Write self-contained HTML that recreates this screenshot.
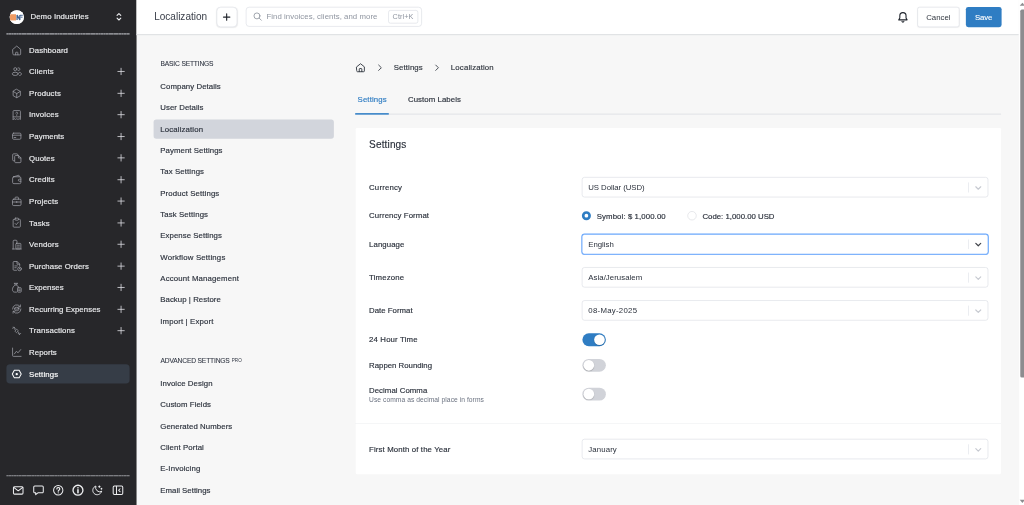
<!DOCTYPE html><html><head><meta charset="utf-8"><title>Localization</title><style>
*{box-sizing:border-box;margin:0;padding:0}
html,body{width:1024px;height:505px;overflow:hidden;background:#f7f7f7}
body{font-family:"Liberation Sans",sans-serif;color:#30363f}
#root{filter:opacity(1);position:absolute;left:0;top:0;width:1920px;height:947px;transform:scale(0.533333);transform-origin:0 0;overflow:hidden;background:#f7f7f7}
.abs{position:absolute}
span{white-space:pre}
.row{position:absolute;display:flex;align-items:center}
svg{display:block;overflow:visible}
#sidebar{left:0;top:0;width:256px;height:947px;background:#27272a;color:#ebecee}
.dash{left:12px;width:231px;height:2.3px;background:repeating-linear-gradient(90deg,#919297 0,#919297 3.4px,#77787d 3.4px,#77787d 4.8px)}
.navi{left:12px;width:231px;height:36px;border-radius:7px}
.navi .ic{position:absolute;left:10.2px;top:8.6px;width:18.8px;height:18.8px;color:#9a9ca3}
.navi .lb{position:absolute;left:42.5px;top:0;height:36px;display:flex;align-items:center}
.navi .pl{position:absolute;left:208px;top:11px;width:14px;height:14px;color:#dfe0e4}
#header{left:256px;top:0;width:1654px;height:65.5px;background:#fff;border-bottom:2px solid #dddfe2}
.btn{border-radius:4.5px;display:flex;align-items:center;justify-content:center}
.snav{left:288px;width:338px;height:36px;border-radius:5px;display:flex;align-items:center;padding-left:12.5px}
.sel{border:1.5px solid #d4d8df;border-radius:5px;background:#fff;height:38px;left:1091px;width:761.5px}
.sel .v{position:absolute;left:11px;top:0.6px;height:35px;display:flex;align-items:center}
.sel .sep{position:absolute;right:35.2px;top:9px;width:1.6px;height:18.5px;background:#dadde4}
.sel .ch{position:absolute;right:8.500px;top:10px;width:18.5px;height:18.5px;color:#c6c9d0}
.lab{left:692px;height:20px;display:flex;align-items:center}
.tog{left:1092px;width:44px;height:24px;border-radius:12px;background:#d1d3d9}
.tog i{position:absolute;top:2px;left:2px;width:20px;height:20px;border-radius:10px;background:#fff;box-shadow:0 1px 2px rgba(0,0,0,.25)}
.tog.on{background:#2f7dc3}
.tog.on i{left:22px}
</style></head><body><div id="root"><div id="sidebar" class="abs"><div class="abs" style="left:18.1px;top:18.5px;width:26.6px;height:26.6px;border-radius:50%;background:#fff;overflow:hidden"><svg viewBox="0 0 26.6 26.6" width="26.6" height="26.6"><rect width="26.6" height="26.6" fill="#fff"/><rect x="0.8" y="7.7" width="11.3" height="11.600" fill="#ef9a62"/><path d="M14 18.3V9.200l5.200 9.100V9.200" fill="none" stroke="#41618f" stroke-width="2.3" stroke-linejoin="bevel"/><path d="M19.500 9.700h5.200M20.500 13.200h3.800" stroke="#41618f" stroke-width="1.800"/></svg></div><div class="row" style="left:57px;top:10.5px;height:40px"><span style="font-size:14.63px;letter-spacing:0.198px;font-weight:400;-webkit-text-stroke:0.3px currentColor;">Demo Industries</span></div><div class="abs" style="left:214.5px;top:22px;width:16px;height:19px;color:#f0f1f3"><svg viewBox="0 0 16 18" width="16" height="19" fill="none" stroke="currentColor" stroke-width="2" stroke-linecap="round" stroke-linejoin="round"><path d="M4.5 6.5L8 3L11.5 6.5M4.5 11.5L8 15L11.5 11.5"/></svg></div><div class="abs dash" style="top:62.3px"></div><div class="abs navi" style="top:76.00px;"><div class="ic" style=""><svg viewBox="0 0 18 18" width="100%" height="100%" fill="none" stroke="currentColor" stroke-width="1.4" stroke-linecap="round" stroke-linejoin="round" ><path d="M2 7.200L9 1.300l7 5.900v8.300a1.600 1.600 0 0 1-1.600 1.600H3.600A1.600 1.600 0 0 1 2 15.500z"/><path d="M7 17v-3.800a0.800 0.800 0 0 1 .8-.8h2.400a0.800 0.800 0 0 1 .8.8V17"/></svg></div><div class="lb"><span style="font-size:14.63px;letter-spacing:0.163px;font-weight:400;-webkit-text-stroke:0.3px currentColor;">Dashboard</span></div></div><div class="abs navi" style="top:116.47px;"><div class="ic" style=""><svg viewBox="0 0 18 18" width="100%" height="100%" fill="none" stroke="currentColor" stroke-width="1.4" stroke-linecap="round" stroke-linejoin="round" ><circle cx="6.400" cy="4.500" r="2.700"/><path d="M11.300 2.200a2.500 2.500 0 1 1 0 4.600"/><ellipse cx="6.300" cy="12.900" rx="5.400" ry="2.900"/><path d="M13.200 10.200c2.600.1 4.300 1.300 4.300 2.900 0 1.300-1.300 2.400-3.300 2.800"/></svg></div><div class="lb"><span style="font-size:14.63px;letter-spacing:0.205px;font-weight:400;-webkit-text-stroke:0.3px currentColor;">Clients</span></div><div class="pl"><svg viewBox="0 0 14 14" width="100%" height="100%" fill="none" stroke="currentColor" stroke-width="1.5" stroke-linecap="round" stroke-linejoin="round" ><path d="M7 1v12M1 7h12"/></svg></div></div><div class="abs navi" style="top:156.94px;"><div class="ic" style=""><svg viewBox="0 0 18 18" width="100%" height="100%" fill="none" stroke="currentColor" stroke-width="1.4" stroke-linecap="round" stroke-linejoin="round" ><path d="M9 1.5l6.5 3.7v7.600L9 16.500 2.500 12.800V5.200z"/><path d="M2.700 5.300L9 9l6.300-3.700M9 9v7.300"/></svg></div><div class="lb"><span style="font-size:14.63px;letter-spacing:0.277px;font-weight:400;-webkit-text-stroke:0.3px currentColor;">Products</span></div><div class="pl"><svg viewBox="0 0 14 14" width="100%" height="100%" fill="none" stroke="currentColor" stroke-width="1.5" stroke-linecap="round" stroke-linejoin="round" ><path d="M7 1v12M1 7h12"/></svg></div></div><div class="abs navi" style="top:197.41px;"><div class="ic" style=""><svg viewBox="0 0 18 18" width="100%" height="100%" fill="none" stroke="currentColor" stroke-width="1.4" stroke-linecap="round" stroke-linejoin="round" ><path d="M2.400 17.200V2.800a1.500 1.500 0 0 1 1.500-1.500h10.200a1.500 1.500 0 0 1 1.500 1.500v14.400l-2.200-1.300-2.200 1.300L9 15.900l-2.200 1.300-2.200-1.300z"/><path d="M2.600 12.600h12.800"/><path d="M7.300 5.900a1.700 1.700 0 1 1 2.500 1.500c-.5.300-.8.600-.8 1.200M9 10.300v.1"/></svg></div><div class="lb"><span style="font-size:14.63px;letter-spacing:0.246px;font-weight:400;-webkit-text-stroke:0.3px currentColor;">Invoices</span></div><div class="pl"><svg viewBox="0 0 14 14" width="100%" height="100%" fill="none" stroke="currentColor" stroke-width="1.5" stroke-linecap="round" stroke-linejoin="round" ><path d="M7 1v12M1 7h12"/></svg></div></div><div class="abs navi" style="top:237.88px;"><div class="ic" style=""><svg viewBox="0 0 18 18" width="100%" height="100%" fill="none" stroke="currentColor" stroke-width="1.4" stroke-linecap="round" stroke-linejoin="round" ><rect x="1.500" y="3.500" width="15" height="11" rx="2"/><path d="M1.500 7.200h15M4.300 11.300h3"/></svg></div><div class="lb"><span style="font-size:14.63px;letter-spacing:0.117px;font-weight:400;-webkit-text-stroke:0.3px currentColor;">Payments</span></div><div class="pl"><svg viewBox="0 0 14 14" width="100%" height="100%" fill="none" stroke="currentColor" stroke-width="1.5" stroke-linecap="round" stroke-linejoin="round" ><path d="M7 1v12M1 7h12"/></svg></div></div><div class="abs navi" style="top:278.35px;"><div class="ic" style=""><svg viewBox="0 0 18 18" width="100%" height="100%" fill="none" stroke="currentColor" stroke-width="1.4" stroke-linecap="round" stroke-linejoin="round" ><path d="M4.500 13.800H3.300a1.600 1.600 0 0 1-1.600-1.600V3a1.600 1.600 0 0 1 1.600-1.600h5.900a1.600 1.600 0 0 1 1.600 1.600v.8"/><path d="M5.300 5.900a1.600 1.600 0 0 1 1.600-1.600h5.300l4.300 4.300v7a1.600 1.600 0 0 1-1.600 1.600h-8a1.600 1.600 0 0 1-1.600-1.600z"/><path d="M12 4.500v4.300h4.300"/></svg></div><div class="lb"><span style="font-size:14.63px;letter-spacing:0.146px;font-weight:400;-webkit-text-stroke:0.3px currentColor;">Quotes</span></div><div class="pl"><svg viewBox="0 0 14 14" width="100%" height="100%" fill="none" stroke="currentColor" stroke-width="1.5" stroke-linecap="round" stroke-linejoin="round" ><path d="M7 1v12M1 7h12"/></svg></div></div><div class="abs navi" style="top:318.82px;"><div class="ic" style=""><svg viewBox="0 0 18 18" width="100%" height="100%" fill="none" stroke="currentColor" stroke-width="1.4" stroke-linecap="round" stroke-linejoin="round" ><path d="M3.300 4.300l8.800-2.600a1 1 0 0 1 1.300.96V4.300"/><rect x="1.600" y="4.300" width="14.800" height="12.300" rx="2.200"/><path d="M16.400 8.600h-2.700a1.850 1.850 0 0 0 0 3.700h2.700"/></svg></div><div class="lb"><span style="font-size:14.63px;letter-spacing:0.241px;font-weight:400;-webkit-text-stroke:0.3px currentColor;">Credits</span></div><div class="pl"><svg viewBox="0 0 14 14" width="100%" height="100%" fill="none" stroke="currentColor" stroke-width="1.5" stroke-linecap="round" stroke-linejoin="round" ><path d="M7 1v12M1 7h12"/></svg></div></div><div class="abs navi" style="top:359.29px;"><div class="ic" style=""><svg viewBox="0 0 18 18" width="100%" height="100%" fill="none" stroke="currentColor" stroke-width="1.4" stroke-linecap="round" stroke-linejoin="round" ><rect x="1.300" y="5.300" width="15.400" height="11.400" rx="2.200"/><path d="M5.900 5.300V3.100A1.600 1.600 0 0 1 7.500 1.500h3a1.600 1.600 0 0 1 1.600 1.600v2.200M1.400 10.300h15.200M9 9.200v2.200"/></svg></div><div class="lb"><span style="font-size:14.63px;letter-spacing:0.221px;font-weight:400;-webkit-text-stroke:0.3px currentColor;">Projects</span></div><div class="pl"><svg viewBox="0 0 14 14" width="100%" height="100%" fill="none" stroke="currentColor" stroke-width="1.5" stroke-linecap="round" stroke-linejoin="round" ><path d="M7 1v12M1 7h12"/></svg></div></div><div class="abs navi" style="top:399.76px;"><div class="ic" style=""><svg viewBox="0 0 18 18" width="100%" height="100%" fill="none" stroke="currentColor" stroke-width="1.4" stroke-linecap="round" stroke-linejoin="round" ><path d="M5.800 3H4.100a1.600 1.600 0 0 0-1.600 1.600v11a1.600 1.600 0 0 0 1.600 1.600h9.800a1.600 1.600 0 0 0 1.600-1.600v-11A1.600 1.600 0 0 0 13.900 3H12.200"/><rect x="5.800" y="1" width="6.400" height="3.600" rx="1.100"/><path d="M6.100 10.600l2.100 2.100 3.800-4.600"/></svg></div><div class="lb"><span style="font-size:14.63px;letter-spacing:0.319px;font-weight:400;-webkit-text-stroke:0.3px currentColor;">Tasks</span></div><div class="pl"><svg viewBox="0 0 14 14" width="100%" height="100%" fill="none" stroke="currentColor" stroke-width="1.5" stroke-linecap="round" stroke-linejoin="round" ><path d="M7 1v12M1 7h12"/></svg></div></div><div class="abs navi" style="top:440.23px;"><div class="ic" style=""><svg viewBox="0 0 18 18" width="100%" height="100%" fill="none" stroke="currentColor" stroke-width="1.4" stroke-linecap="round" stroke-linejoin="round" ><path d="M2.600 17V3A1.600 1.600 0 0 1 4.200 1.400h3.600A1.600 1.600 0 0 1 9.400 3v3.600"/><rect x="7.400" y="7" width="9" height="10" rx="1.300"/><path d="M1.300 17.100h16M10 10.300h3.800M10 13.600h3.800"/></svg></div><div class="lb"><span style="font-size:14.63px;letter-spacing:0.317px;font-weight:400;-webkit-text-stroke:0.3px currentColor;">Vendors</span></div><div class="pl"><svg viewBox="0 0 14 14" width="100%" height="100%" fill="none" stroke="currentColor" stroke-width="1.5" stroke-linecap="round" stroke-linejoin="round" ><path d="M7 1v12M1 7h12"/></svg></div></div><div class="abs navi" style="top:480.70px;"><div class="ic" style=""><svg viewBox="0 0 18 18" width="100%" height="100%" fill="none" stroke="currentColor" stroke-width="1.4" stroke-linecap="round" stroke-linejoin="round" ><path d="M8.600 17H4.100a1.600 1.600 0 0 1-1.600-1.600V2.900a1.600 1.600 0 0 1 1.600-1.600h5.600l4.600 4.600v3.300"/><path d="M9.500 1.500v4.600h4.600M5.500 9.200h4.500M5.500 12.400h2.500"/><circle cx="14" cy="14.500" r="3.300"/><path d="M14 13.200v1.400l.9.700"/></svg></div><div class="lb"><span style="font-size:14.63px;letter-spacing:0.111px;font-weight:400;-webkit-text-stroke:0.3px currentColor;">Purchase Orders</span></div><div class="pl"><svg viewBox="0 0 14 14" width="100%" height="100%" fill="none" stroke="currentColor" stroke-width="1.5" stroke-linecap="round" stroke-linejoin="round" ><path d="M7 1v12M1 7h12"/></svg></div></div><div class="abs navi" style="top:521.17px;"><div class="ic" style=""><svg viewBox="0 0 18 18" width="100%" height="100%" fill="none" stroke="currentColor" stroke-width="1.4" stroke-linecap="round" stroke-linejoin="round" ><path d="M4.600 1.200h5.800M5.400 1.200l.9 3M9.600 1.200l-.9 3M6.300 4.200C3.200 5.800 1.300 9 1.300 12.500c0 2.500 1.500 4.500 3.900 4.500h3.300"/><path d="M8.700 4.200c1.400.8 2.500 1.900 3.200 3.200"/><rect x="10.400" y="9" width="6.600" height="8" rx="1.100"/><path d="M12.300 11.600h2.800M12.300 14.300h2.800"/></svg></div><div class="lb"><span style="font-size:14.63px;letter-spacing:0.078px;font-weight:400;-webkit-text-stroke:0.3px currentColor;">Expenses</span></div><div class="pl"><svg viewBox="0 0 14 14" width="100%" height="100%" fill="none" stroke="currentColor" stroke-width="1.5" stroke-linecap="round" stroke-linejoin="round" ><path d="M7 1v12M1 7h12"/></svg></div></div><div class="abs navi" style="top:561.64px;"><div class="ic" style=""><svg viewBox="0 0 18 18" width="100%" height="100%" fill="none" stroke="currentColor" stroke-width="1.4" stroke-linecap="round" stroke-linejoin="round" ><path d="M1.500 9A7.500 7.500 0 0 1 15.200 4.800M16.500 9A7.500 7.500 0 0 1 2.800 13.200"/><path d="M15.600 1.600v3.400h-3.400M2.400 16.400V13h3.400"/><ellipse cx="9" cy="7.600" rx="3.700" ry="1.700"/><path d="M5.300 7.600v2.800c0 .95 1.650 1.700 3.700 1.700s3.700-.75 3.700-1.700V7.600"/></svg></div><div class="lb"><span style="font-size:14.63px;letter-spacing:0.128px;font-weight:400;-webkit-text-stroke:0.3px currentColor;">Recurring Expenses</span></div><div class="pl"><svg viewBox="0 0 14 14" width="100%" height="100%" fill="none" stroke="currentColor" stroke-width="1.5" stroke-linecap="round" stroke-linejoin="round" ><path d="M7 1v12M1 7h12"/></svg></div></div><div class="abs navi" style="top:602.11px;"><div class="ic" style=""><svg viewBox="0 0 18 18" width="100%" height="100%" fill="none" stroke="currentColor" stroke-width="1.3" stroke-linecap="round" stroke-linejoin="round" ><path d="M1.800 4.600l2.300-2.300 2.300 2.300M2.300 2.300h0"/><path d="M6.100 7.900L9 5l2.900 2.900L9 10.800z" transform="translate(0 1)"/><path d="M4.100 2.500c0 2 .8 3.400 2 4.600M11.900 11c1.200 1.200 2 2.600 2 4.500"/><path d="M11.600 13.400l2.300 2.300 2.300-2.300"/></svg></div><div class="lb"><span style="font-size:14.63px;letter-spacing:0.264px;font-weight:400;-webkit-text-stroke:0.3px currentColor;">Transactions</span></div><div class="pl"><svg viewBox="0 0 14 14" width="100%" height="100%" fill="none" stroke="currentColor" stroke-width="1.5" stroke-linecap="round" stroke-linejoin="round" ><path d="M7 1v12M1 7h12"/></svg></div></div><div class="abs navi" style="top:642.58px;"><div class="ic" style=""><svg viewBox="0 0 18 18" width="100%" height="100%" fill="none" stroke="currentColor" stroke-width="1.4" stroke-linecap="round" stroke-linejoin="round" ><path d="M1.500 1.500v13.400a1.600 1.600 0 0 0 1.600 1.600H16.800"/><path d="M4.800 12l3.400-4.600 3.200 2.600 4.700-5.700"/></svg></div><div class="lb"><span style="font-size:14.63px;letter-spacing:0.121px;font-weight:400;-webkit-text-stroke:0.3px currentColor;">Reports</span></div></div><div class="abs navi" style="top:683.05px;background:#363d47;"><div class="ic" style="color:#fff"><svg viewBox="0 0 18 18" width="100%" height="100%" fill="none" stroke="currentColor" stroke-width="1.8" stroke-linecap="round" stroke-linejoin="round" ><path d="M1 9L4.700 2.200h8.600L17 9l-3.700 6.800H4.700z"/><circle cx="9" cy="9" r="2.100" fill="currentColor" stroke="none"/></svg></div><div class="lb"><span style="font-size:14.63px;letter-spacing:0.215px;font-weight:400;-webkit-text-stroke:0.3px currentColor;color:#fff;">Settings</span></div></div><div class="abs dash" style="top:890.8px"></div><div class="abs" style="left:22.9px;top:908.300px;width:22.4px;height:22.4px;color:#eeeff1"><svg viewBox="0 0 20 20" width="100%" height="100%" fill="none" stroke="currentColor" stroke-width="1.7" stroke-linecap="round" stroke-linejoin="round" ><rect x="2" y="4" width="16" height="12.500" rx="1.800"/><path d="M2.500 5.200L10 11l7.500-5.800"/></svg></div><div class="abs" style="left:60.5px;top:908.300px;width:22.4px;height:22.4px;color:#eeeff1"><svg viewBox="0 0 20 20" width="100%" height="100%" fill="none" stroke="currentColor" stroke-width="1.7" stroke-linecap="round" stroke-linejoin="round" ><path d="M3.800 2.800h12.400A1.800 1.800 0 0 1 18 4.600v8a1.800 1.800 0 0 1-1.800 1.800H9l-3.700 3v-3H3.800A1.800 1.800 0 0 1 2 12.600v-8a1.800 1.800 0 0 1 1.800-1.800z"/></svg></div><div class="abs" style="left:97.6px;top:908.300px;width:22.4px;height:22.4px;color:#eeeff1"><svg viewBox="0 0 20 20" width="100%" height="100%" fill="none" stroke="currentColor" stroke-width="1.7" stroke-linecap="round" stroke-linejoin="round" ><circle cx="10" cy="10" r="7.800"/><path d="M7.700 7.800a2.400 2.400 0 1 1 3.400 2.200c-.7.400-1.100.9-1.100 1.700M10 14.300v.1" stroke-width="2"/></svg></div><div class="abs" style="left:135.0px;top:908.300px;width:22.4px;height:22.4px;color:#eeeff1"><svg viewBox="0 0 20 20" width="100%" height="100%" fill="none" stroke="currentColor" stroke-width="2.2" stroke-linecap="round" stroke-linejoin="round" ><circle cx="10" cy="10" r="8.300"/><path d="M10 9.300v5M10 5.800v.2" stroke-width="2.6"/></svg></div><div class="abs" style="left:172.3px;top:908.300px;width:22.4px;height:22.4px;color:#eeeff1"><svg viewBox="0 0 20 20" width="100%" height="100%" fill="none" stroke="currentColor" stroke-width="1.6" stroke-linecap="round" stroke-linejoin="round" ><path d="M16.500 12.200A7.200 7.200 0 0 1 7 3a7.500 7.500 0 1 0 9.500 9.200z"/><path d="M12.800 2.800v2.400M11.600 4h2.400M16.300 6.700v1.600M15.500 7.500h1.600"/></svg></div><div class="abs" style="left:209.8px;top:908.300px;width:22.4px;height:22.4px;color:#eeeff1"><svg viewBox="0 0 20 20" width="100%" height="100%" fill="none" stroke="currentColor" stroke-width="1.7" stroke-linecap="round" stroke-linejoin="round" ><rect x="2" y="3" width="16" height="14" rx="2"/><path d="M7.500 3.200v13.600M13.500 7.500L11 10l2.500 2.500"/></svg></div></div><div id="header" class="abs"><div class="row" style="left:33px;top:11.8px;height:40px"><span style="font-size:18.81px;letter-spacing:0.013px;font-weight:400;color:#3b404b;">Localization</span></div><div class="abs btn" style="left:150px;top:13px;width:38.5px;height:38px;border-radius:8px;border:1.5px solid #d4d8df;box-shadow:0 1px 2px rgba(0,0,0,.08);color:#20242c"><svg viewBox="0 0 16 16" width="16" height="16" fill="none" stroke="currentColor" stroke-width="2.1" stroke-linecap="round"><path d="M8 2v12M2 8h12"/></svg></div><div class="abs" style="left:205px;top:13px;width:330px;height:36.5px;border:1.5px solid #d4d8df;border-radius:6px"><div class="abs" style="left:11.5px;top:8px;width:18px;height:18px;color:#8a909b"><svg viewBox="0 0 18 18" width="100%" height="100%" fill="none" stroke="currentColor" stroke-width="1.5" stroke-linecap="round" stroke-linejoin="round" ><circle cx="7.800" cy="7.800" r="5.600"/><path d="M12 12l4 4"/></svg></div><div class="row" style="left:37.5px;top:0;height:33.5px"><span style="font-size:14.63px;letter-spacing:0.108px;font-weight:400;color:#8f95a0;">Find invoices, clients, and more</span></div><div class="abs btn" style="left:266px;top:4.5px;width:55.5px;height:25px;padding-top:1px;border:1.5px solid #d4d8df;border-radius:4px"><span style="font-size:13.58px;letter-spacing:0.206px;font-weight:400;color:#8f95a0;">Ctrl+K</span></div></div><div class="abs" style="left:1426px;top:20.5px;width:22px;height:22px;color:#20252d"><svg viewBox="0 0 20 20" width="100%" height="100%" fill="none" stroke="currentColor" stroke-width="1.85" stroke-linecap="round" stroke-linejoin="round" ><path d="M4.700 7.700a5.300 5.300 0 0 1 10.600 0v4l1.800 3.100H2.900l1.800-3.100z"/><path d="M8.300 17.400a1.800 1.800 0 0 0 3.400 0"/></svg></div><div class="abs btn" style="left:1464px;top:12.5px;width:79px;height:38.5px;border:1.5px solid #d4d8df;box-shadow:0 1px 2px rgba(0,0,0,.06)"><span style="font-size:14.63px;letter-spacing:0.065px;font-weight:400;color:#30363f;">Cancel</span></div><div class="abs btn" style="left:1555px;top:12.5px;width:66.5px;height:38.5px;background:#2f7dc3"><span style="font-size:14.63px;letter-spacing:-0.264px;font-weight:400;-webkit-text-stroke:0.2px currentColor;color:#fff;">Save</span></div></div><div class="abs" style="left:1910.5px;top:0;width:10px;height:947px;background:#fff"></div><div class="abs" style="left:1913px;top:18px;width:8px;height:689.5px;background:#8c8c8f;border-radius:3px 0 0 3px"></div><div class="abs" style="left:1912px;top:4.8px;width:0;height:0;border-left:5px solid transparent;border-right:5px solid transparent;border-bottom:6px solid #8c8c8f"></div><div class="abs" style="left:1912px;top:936.5px;width:0;height:0;border-left:5px solid transparent;border-right:5px solid transparent;border-top:6px solid #8c8c8f"></div><div class="row" style="left:301px;top:109.5px;height:20px"><span style="font-size:12.54px;letter-spacing:-0.334px;font-weight:400;-webkit-text-stroke:0.15px currentColor;color:#2f3542;">BASIC SETTINGS</span></div><div class="abs snav" style="top:144.2px;"><span style="font-size:14.63px;letter-spacing:0.149px;font-weight:400;-webkit-text-stroke:0.3px currentColor;color:#2b313c;">Company Details</span></div><div class="abs snav" style="top:184.2px;"><span style="font-size:14.63px;letter-spacing:0.111px;font-weight:400;-webkit-text-stroke:0.3px currentColor;color:#2b313c;">User Details</span></div><div class="abs snav" style="top:224.2px;background:#d2d5dc;"><span style="font-size:14.63px;letter-spacing:0.275px;font-weight:400;-webkit-text-stroke:0.3px currentColor;color:#2b313c;">Localization</span></div><div class="abs snav" style="top:264.2px;"><span style="font-size:14.63px;letter-spacing:0.140px;font-weight:400;-webkit-text-stroke:0.3px currentColor;color:#2b313c;">Payment Settings</span></div><div class="abs snav" style="top:304.2px;"><span style="font-size:14.63px;letter-spacing:0.208px;font-weight:400;-webkit-text-stroke:0.3px currentColor;color:#2b313c;">Tax Settings</span></div><div class="abs snav" style="top:344.2px;"><span style="font-size:14.63px;letter-spacing:0.219px;font-weight:400;-webkit-text-stroke:0.3px currentColor;color:#2b313c;">Product Settings</span></div><div class="abs snav" style="top:384.2px;"><span style="font-size:14.63px;letter-spacing:0.213px;font-weight:400;-webkit-text-stroke:0.3px currentColor;color:#2b313c;">Task Settings</span></div><div class="abs snav" style="top:424.2px;"><span style="font-size:14.63px;letter-spacing:0.111px;font-weight:400;-webkit-text-stroke:0.3px currentColor;color:#2b313c;">Expense Settings</span></div><div class="abs snav" style="top:464.2px;"><span style="font-size:14.63px;letter-spacing:0.321px;font-weight:400;-webkit-text-stroke:0.3px currentColor;color:#2b313c;">Workflow Settings</span></div><div class="abs snav" style="top:504.2px;"><span style="font-size:14.63px;letter-spacing:0.297px;font-weight:400;-webkit-text-stroke:0.3px currentColor;color:#2b313c;">Account Management</span></div><div class="abs snav" style="top:544.2px;"><span style="font-size:14.63px;letter-spacing:0.101px;font-weight:400;-webkit-text-stroke:0.3px currentColor;color:#2b313c;">Backup | Restore</span></div><div class="abs snav" style="top:584.2px;"><span style="font-size:14.63px;letter-spacing:0.280px;font-weight:400;-webkit-text-stroke:0.3px currentColor;color:#2b313c;">Import | Export</span></div><div class="row" style="left:301px;top:667.3px;height:20px"><span style="font-size:12.54px;letter-spacing:-0.310px;font-weight:400;-webkit-text-stroke:0.15px currentColor;color:#2f3542;">ADVANCED SETTINGS</span><span style="font-size:8.6px;position:relative;top:-1.5px;left:4px;color:#2f3542">PRO</span></div><div class="abs snav" style="top:701.0px"><span style="font-size:14.63px;letter-spacing:0.170px;font-weight:400;-webkit-text-stroke:0.3px currentColor;color:#2b313c;">Invoice Design</span></div><div class="abs snav" style="top:741.0px"><span style="font-size:14.63px;letter-spacing:0.135px;font-weight:400;-webkit-text-stroke:0.3px currentColor;color:#2b313c;">Custom Fields</span></div><div class="abs snav" style="top:781.0px"><span style="font-size:14.63px;letter-spacing:0.155px;font-weight:400;-webkit-text-stroke:0.3px currentColor;color:#2b313c;">Generated Numbers</span></div><div class="abs snav" style="top:821.0px"><span style="font-size:14.63px;letter-spacing:0.162px;font-weight:400;-webkit-text-stroke:0.3px currentColor;color:#2b313c;">Client Portal</span></div><div class="abs snav" style="top:861.0px"><span style="font-size:14.63px;letter-spacing:0.277px;font-weight:400;-webkit-text-stroke:0.3px currentColor;color:#2b313c;">E-Invoicing</span></div><div class="abs snav" style="top:901.0px"><span style="font-size:14.63px;letter-spacing:0.050px;font-weight:400;-webkit-text-stroke:0.3px currentColor;color:#2b313c;">Email Settings</span></div><div class="abs" style="left:666px;top:116.5px;width:20px;height:20px;color:#30363f"><svg viewBox="0 0 20 20" width="100%" height="100%" fill="none" stroke="currentColor" stroke-width="1.7" stroke-linecap="round" stroke-linejoin="round" ><path d="M2.800 8.300L10 2.500l7.200 5.800v7.700a1.500 1.500 0 0 1-1.500 1.500H4.300a1.500 1.500 0 0 1-1.500-1.500z"/><path d="M7.600 17.300v-4.800a1 1 0 0 1 1-1h2.800a1 1 0 0 1 1 1v4.800"/></svg></div><div class="abs" style="left:704px;top:118.5px;width:16px;height:16px;color:#30363f"><svg viewBox="0 0 16 16" width="100%" height="100%" fill="none" stroke="currentColor" stroke-width="1.6" stroke-linecap="round" stroke-linejoin="round" ><path d="M6 3l5 5-5 5"/></svg></div><div class="row" style="left:738.2px;top:116.5px;height:20px"><span style="font-size:14.63px;letter-spacing:0.215px;font-weight:400;-webkit-text-stroke:0.3px currentColor;color:#30363f;">Settings</span></div><div class="abs" style="left:811px;top:118.5px;width:16px;height:16px;color:#30363f"><svg viewBox="0 0 16 16" width="100%" height="100%" fill="none" stroke="currentColor" stroke-width="1.6" stroke-linecap="round" stroke-linejoin="round" ><path d="M6 3l5 5-5 5"/></svg></div><div class="row" style="left:845.4px;top:116.5px;height:20px"><span style="font-size:14.63px;letter-spacing:0.275px;font-weight:400;-webkit-text-stroke:0.3px currentColor;color:#30363f;">Localization</span></div><div class="abs" style="left:666px;top:212.8px;width:1211px;height:2px;background:#e1e3e7"></div><div class="row" style="left:670.5px;top:176px;height:20px"><span style="font-size:14.63px;letter-spacing:0.215px;font-weight:400;-webkit-text-stroke:0.3px currentColor;color:#2f7dc3;">Settings</span></div><div class="abs" style="left:666px;top:212px;width:63px;height:3px;background:#3b86c9"></div><div class="row" style="left:765px;top:176px;height:20px"><span style="font-size:14.63px;letter-spacing:0.133px;font-weight:400;-webkit-text-stroke:0.3px currentColor;color:#2b313c;">Custom Labels</span></div><div class="abs" style="left:667.2px;top:239.8px;width:1209.8px;height:649.2px;background:#fff;border-radius:2.5px"></div><div class="row" style="left:692px;top:257px;height:28px"><span style="font-size:18.81px;letter-spacing:0.281px;font-weight:400;-webkit-text-stroke:0.3px currentColor;color:#2b313c;">Settings</span></div><div class="abs lab" style="top:341.0px"><span style="font-size:14.63px;letter-spacing:0.326px;font-weight:400;-webkit-text-stroke:0.3px currentColor;color:#2b313c;">Currency</span></div><div class="abs sel" style="top:332.0px;"><div class="v"><span style="font-size:14.63px;letter-spacing:-0.124px;font-weight:400;color:#2b313c;">US Dollar (USD)</span></div><div class="sep"></div><div class="ch" style=""><svg viewBox="0 0 18 18" width="100%" height="100%" fill="none" stroke="currentColor" stroke-width="2.1" stroke-linecap="round" stroke-linejoin="round" ><path d="M4.500 7l4.500 4.500L13.500 7"/></svg></div></div><div class="abs lab" style="top:394.0px"><span style="font-size:14.63px;letter-spacing:0.194px;font-weight:400;-webkit-text-stroke:0.3px currentColor;color:#2b313c;">Currency Format</span></div><div class="abs" style="left:1091px;top:396px;width:17px;height:17px;border-radius:50%;border:5.3px solid #2f7dc3;background:#fff"></div><div class="row" style="left:1119px;top:395px;height:20px"><span style="font-size:14.63px;letter-spacing:0.181px;font-weight:400;-webkit-text-stroke:0.3px currentColor;color:#2b313c;">Symbol: $ 1,000.00</span></div><div class="abs" style="left:1289px;top:396px;width:17px;height:17px;border-radius:50%;border:1.5px solid #d3d6dc;background:#fff"></div><div class="row" style="left:1317px;top:395px;height:20px"><span style="font-size:14.63px;letter-spacing:0.012px;font-weight:400;-webkit-text-stroke:0.3px currentColor;color:#2b313c;">Code: 1,000.00 USD</span></div><div class="abs lab" style="top:447.7px"><span style="font-size:14.63px;letter-spacing:0.145px;font-weight:400;-webkit-text-stroke:0.3px currentColor;color:#2b313c;">Language</span></div><div class="abs sel" style="top:438.7px;border-color:#4b96fa;box-shadow:0 0 0 1px rgba(60,140,250,.7);"><div class="v"><span style="font-size:14.63px;letter-spacing:-0.033px;font-weight:400;color:#2b313c;">English</span></div><div class="sep"></div><div class="ch" style="color:#3f4148;top:9px"><svg viewBox="0 0 18 18" width="100%" height="100%" fill="none" stroke="currentColor" stroke-width="2.1" stroke-linecap="round" stroke-linejoin="round" ><path d="M4.500 7l4.500 4.500L13.500 7"/></svg></div></div><div class="abs lab" style="top:510.2px"><span style="font-size:14.63px;letter-spacing:0.266px;font-weight:400;-webkit-text-stroke:0.3px currentColor;color:#2b313c;">Timezone</span></div><div class="abs sel" style="top:501.2px;"><div class="v"><span style="font-size:14.63px;letter-spacing:0.090px;font-weight:400;color:#2b313c;">Asia/Jerusalem</span></div><div class="sep"></div><div class="ch" style=""><svg viewBox="0 0 18 18" width="100%" height="100%" fill="none" stroke="currentColor" stroke-width="2.1" stroke-linecap="round" stroke-linejoin="round" ><path d="M4.500 7l4.500 4.500L13.500 7"/></svg></div></div><div class="abs lab" style="top:572.3px"><span style="font-size:14.63px;letter-spacing:0.028px;font-weight:400;-webkit-text-stroke:0.3px currentColor;color:#2b313c;">Date Format</span></div><div class="abs sel" style="top:563.3px;"><div class="v"><span style="font-size:14.63px;letter-spacing:0.524px;font-weight:400;color:#2b313c;">08-May-2025</span></div><div class="sep"></div><div class="ch" style=""><svg viewBox="0 0 18 18" width="100%" height="100%" fill="none" stroke="currentColor" stroke-width="2.1" stroke-linecap="round" stroke-linejoin="round" ><path d="M4.500 7l4.500 4.500L13.500 7"/></svg></div></div><div class="abs lab" style="top:626.6px"><span style="font-size:14.63px;letter-spacing:0.276px;font-weight:400;-webkit-text-stroke:0.3px currentColor;color:#2b313c;">24 Hour Time</span></div><div class="abs tog on" style="top:624.6px"><i></i></div><div class="abs lab" style="top:675.3px"><span style="font-size:14.63px;letter-spacing:0.013px;font-weight:400;-webkit-text-stroke:0.3px currentColor;color:#2b313c;">Rappen Rounding</span></div><div class="abs tog" style="top:673.3px"><i></i></div><div class="abs lab" style="top:721.0px"><span style="font-size:14.63px;letter-spacing:0.079px;font-weight:400;-webkit-text-stroke:0.3px currentColor;color:#2b313c;">Decimal Comma</span></div><div class="row" style="left:692px;top:741px;height:16px"><span style="font-size:12.54px;letter-spacing:0.104px;font-weight:400;color:#6b7280;">Use comma as decimal place in forms</span></div><div class="abs tog" style="top:726.8px"><i></i></div><div class="abs" style="left:666px;top:793.5px;width:1211px;height:1.5px;background:#eceef1"></div><div class="abs lab" style="top:831.6px"><span style="font-size:14.63px;letter-spacing:0.243px;font-weight:400;-webkit-text-stroke:0.3px currentColor;color:#2b313c;">First Month of the Year</span></div><div class="abs sel" style="top:823.0px;"><div class="v"><span style="font-size:14.63px;letter-spacing:0.228px;font-weight:400;color:#2b313c;">January</span></div><div class="sep"></div><div class="ch" style=""><svg viewBox="0 0 18 18" width="100%" height="100%" fill="none" stroke="currentColor" stroke-width="2.1" stroke-linecap="round" stroke-linejoin="round" ><path d="M4.500 7l4.500 4.500L13.500 7"/></svg></div></div></div></body></html>
